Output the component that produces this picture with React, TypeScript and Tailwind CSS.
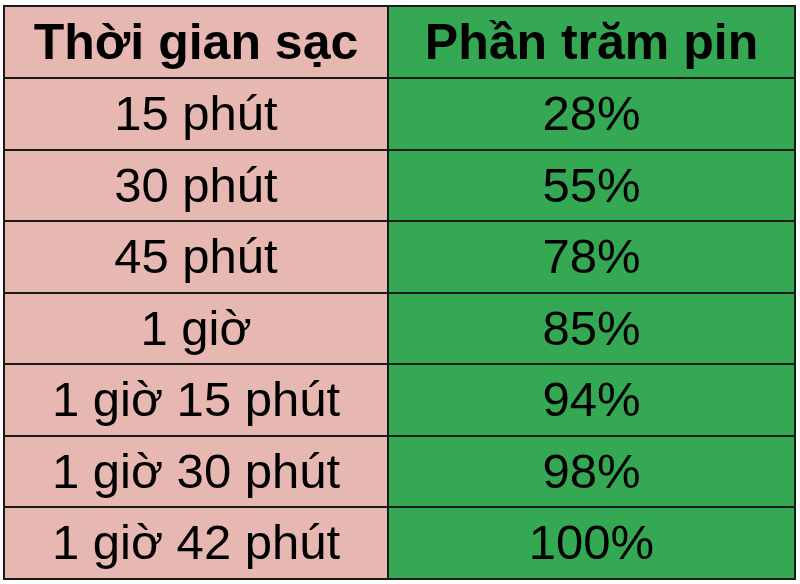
import React from 'react';

type ChargeRow = {
  time: string
  percent: string
}

// Thời gian sạc -> phần trăm pin
const rows: ChargeRow[] = [
  { time: '15 phút', percent: '28%' },
  { time: '30 phút', percent: '55%' },
  { time: '45 phút', percent: '78%' },
  { time: '1 giờ', percent: '85%' },
  { time: '1 giờ 15 phút', percent: '94%' },
  { time: '1 giờ 30 phút', percent: '98%' },
  { time: '1 giờ 42 phút', percent: '100%' },
];

export default function App() {
  return (
    <div
      className="w-[800px] h-[584px] bg-white pl-[3px] pt-[5px] text-black"
      style={{ fontFamily: '"Liberation Sans", Arial, sans-serif' }}
    >
      <table className="w-[791px] border-collapse border-2 border-black table-fixed">
        <colgroup>
          <col className="w-[384px]" />
          <col className="w-[407px]" />
        </colgroup>
        <thead>
          <tr className="h-[72px]">
            <th className="border-2 border-[#1a1a1a] bg-[#e7b8b2] text-[50px] font-bold leading-none text-center p-0">
              Thời gian sạc
            </th>
            <th className="border-2 border-[#1a1a1a] bg-[#34a853] text-[50px] font-bold leading-none text-center p-0">
              Phần trăm pin
            </th>
          </tr>
        </thead>
        <tbody>
          {rows.map((row: ChargeRow, index: number) => (
            <tr key={index} className="h-[71.5px]">
              <td className="border-2 border-[#1a1a1a] bg-[#e7b8b2] text-[49px] leading-none text-center p-0">
                {row.time}
              </td>
              <td className="border-2 border-[#1a1a1a] bg-[#34a853] text-[49px] leading-none text-center p-0">
                {row.percent}
              </td>
            </tr>
          ))}
        </tbody>
      </table>
    </div>
  );
}
